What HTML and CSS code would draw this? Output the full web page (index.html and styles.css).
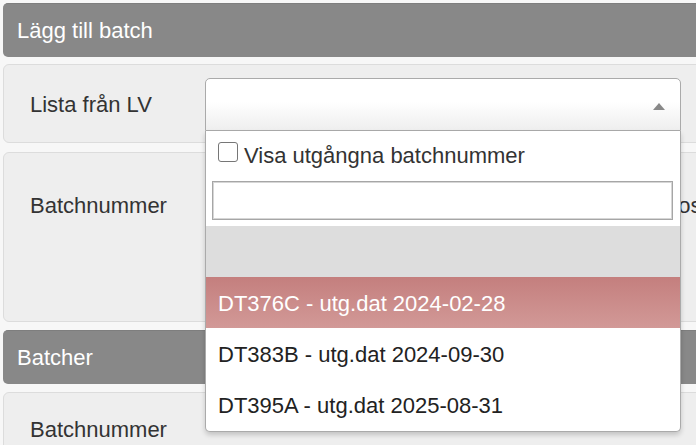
FILE: index.html
```html
<!DOCTYPE html>
<html lang="sv">
<head>
<meta charset="utf-8">
<title>Lägg till batch</title>
<link rel="stylesheet" href="styles.css">
</head>
<body>
<div class="page">
  <div class="bar">Lägg till batch</div>

  <div class="panel panel-lv">
    <div class="row">
      <span class="lbl">Lista från LV</span>
      <div class="combo">
        <div class="combo-box"><span class="arrow"></span></div>
        <div class="drop">
          <label class="check-row"><input type="checkbox" class="cb"><span>Visa utgångna batchnummer</span></label>
          <input class="search" type="text">
          <ul class="results">
            <li class="res empty"></li>
            <li class="res hl">DT376C - utg.dat 2024-02-28</li>
            <li class="res">DT383B - utg.dat 2024-09-30</li>
            <li class="res">DT395A - utg.dat 2025-08-31</li>
          </ul>
        </div>
      </div>
    </div>
  </div>

  <div class="panel panel-batch">
    <div class="row">
      <span class="lbl">Batchnummer</span>
      <div class="field"></div>
      <span class="aside">dos</span>
    </div>
  </div>

  <div class="bar">Batcher</div>

  <div class="panel panel-list">
    <div class="row">
      <span class="lbl">Batchnummer</span>
    </div>
  </div>
</div>
</body>
</html>
```

FILE: styles.css
```css
html, body {
  margin: 0;
  padding: 0;
}
body {
  background: #f7f7f7;
  overflow: hidden;
  font-family: "Liberation Sans", Arial, sans-serif;
  font-size: 22px;
  line-height: 25px;
  color: #333;
}
.page {
  width: 760px;
  padding: 3px 0 0 3px;
  display: flex;
  flex-direction: column;
}
.bar {
  height: 54px;
  line-height: 54px;
  background: #888;
  color: #fff;
  padding-left: 14px;
  border-radius: 5px 0 0 5px;
  border-top: 1px solid #7e7e7e;
  box-sizing: border-box;
}
.panel {
  background: #eee;
  border: 1px solid #dcdcdc;
  border-radius: 6px 0 0 6px;
  padding-left: 26px;
  box-sizing: border-box;
}
.panel-lv {
  margin-top: 7px;
  padding-top: 13px;
  padding-bottom: 11px;
}
.panel-batch {
  margin-top: 9px;
  height: 170px;
  padding-top: 26px;
}
.panel-list {
  margin-top: 8px;
  padding-top: 10px;
  height: 80px;
}
.panel-batch + .bar {
  margin-top: 8px;
}
.row {
  display: flex;
  align-items: center;
  height: 53px;
}
.lbl {
  width: 175px;
  flex: none;
}
.combo {
  position: relative;
  width: 476px;
  height: 53px;
}
.combo-box {
  height: 53px;
  box-sizing: border-box;
  border: 1px solid #aaa;
  border-radius: 5px 5px 0 0;
  background: linear-gradient(to top, #eee 0%, #fff 55%);
  display: flex;
  align-items: center;
  justify-content: flex-end;
  padding-right: 15px;
}
.arrow {
  width: 0;
  height: 0;
  border-left: 6px solid transparent;
  border-right: 6px solid transparent;
  border-bottom: 7px solid #888;
  margin-top: 4px;
}
.drop {
  position: absolute;
  z-index: 10;
  left: 0;
  top: 53px;
  width: 476px;
  box-sizing: border-box;
  background: #fff;
  border: 1px solid #aaa;
  border-top: 0;
  border-radius: 0 0 5px 5px;
  box-shadow: 0 3px 5px rgba(0, 0, 0, 0.18);
  padding-top: 12px;
  overflow: hidden;
}
.check-row {
  display: flex;
  align-items: flex-start;
  height: 25px;
  padding-left: 12px;
  color: #333;
}
.cb {
  appearance: none;
  -webkit-appearance: none;
  width: 20px;
  height: 20px;
  margin: -1px 6px 0 0;
  box-sizing: border-box;
  border: 1.5px solid #767676;
  border-radius: 3px;
  background: #fff;
  flex: none;
}
.search {
  display: block;
  margin: 13px 7px 6px 6px;
  width: 461px;
  height: 39px;
  box-sizing: border-box;
  border: 1px solid #a6a6a6;
  box-shadow: inset 0 0 0 1px #d6d6d6;
  background: #fff;
  padding: 0 6px;
  font: inherit;
  outline: none;
}
.results {
  list-style: none;
  margin: 0;
  padding: 0;
}
.res {
  height: 51px;
  box-sizing: border-box;
  padding: 14px 12px 12px;
  color: #222;
  white-space: nowrap;
}
.res:last-child {
  height: 52px;
}
.res.empty {
  background: #ddd;
}
.res.hl {
  background: linear-gradient(to bottom, #c47f7e 0%, #d29997 100%);
  color: #fff;
}
.field {
  width: 461px;
  height: 53px;
  flex: none;
}
.aside {
  white-space: nowrap;
  color: #333;
}
```
